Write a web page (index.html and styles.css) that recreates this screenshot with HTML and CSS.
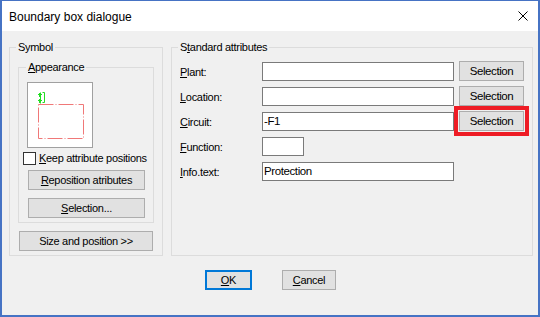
FILE: index.html
```html
<!DOCTYPE html>
<html lang="en">
<head>
    <meta charset="UTF-8">
    <meta name="viewport" content="width=device-width, initial-scale=1.0">
    <title>Boundary box dialogue</title>
    <link rel="stylesheet" href="styles.css">
</head>
<body>
    <div class="window">
        <div class="titlebar">
            <span class="title">Boundary box dialogue</span>
            <svg class="close" width="10" height="10" viewBox="0 0 10 10">
                <path d="M0.5 0.5 L9.5 9.5 M9.5 0.5 L0.5 9.5" stroke="#000" stroke-width="1" fill="none"/>
            </svg>
        </div>

        <div class="client">
            <div class="groups">
                <fieldset class="group symbol">
                    <legend>Symbol</legend>

                    <fieldset class="group appearance">
                        <legend><u>A</u>ppearance</legend>
                        <div class="preview">
                            <svg width="64" height="64" viewBox="0 0 64 64">
                                <!-- attribute marker -->
                                <path d="M10 11.5 h4 M11.5 10 v4 M10 17.5 h4 M11.5 16 v4 M12.5 9.5 v11 M14.5 9.5 h2 v10 h-2" stroke="#22dd22" stroke-width="1" fill="none"/>
                                <!-- boundary box -->
                                <rect x="10.5" y="21.5" width="45" height="34" stroke="#f07878" stroke-width="1" fill="none" stroke-dasharray="15 2 1 2"/>
                            </svg>
                        </div>
                        <label class="check">
                            <span class="box"></span>
                            <span><u>K</u>eep attribute positions</span>
                        </label>
                        <button class="btn side"><u>R</u>eposition atributes</button>
                        <button class="btn side gap"><u>S</u>election...</button>
                    </fieldset>

                    <button class="btn size">Size and position &gt;&gt;</button>
                </fieldset>

                <fieldset class="group standard">
                    <legend>S<u>t</u>andard attributes</legend>

                    <div class="row">
                        <label class="field-label"><u>P</u>lant:</label>
                        <input class="field" type="text" value="">
                        <button class="btn pick">Selection</button>
                    </div>
                    <div class="row">
                        <label class="field-label"><u>L</u>ocation:</label>
                        <input class="field" type="text" value="">
                        <button class="btn pick">Selection</button>
                    </div>
                    <div class="row">
                        <label class="field-label"><u>C</u>ircuit:</label>
                        <input class="field" type="text" value="-F1">
                        <button class="btn pick marked">Selection</button>
                    </div>
                    <div class="row">
                        <label class="field-label"><u>F</u>unction:</label>
                        <input class="field short" type="text" value="">
                    </div>
                    <div class="row">
                        <label class="field-label"><u>I</u>nfo.text:</label>
                        <input class="field" type="text" value="Protection">
                    </div>
                </fieldset>
            </div>

            <div class="actions">
                <button class="btn ok"><u>O</u>K</button>
                <button class="btn cancel"><u>C</u>ancel</button>
            </div>
        </div>
    </div>
</body>
</html>
```

FILE: styles.css
```css
* {
    box-sizing: border-box;
}
body {
    margin: 0;
    font-family: 'Liberation Sans', Arial, sans-serif;
    font-size: 11px;
    letter-spacing: -0.3px; /* narrower, like the dialog font */
    color: #000;
    background-color: #f0f0f0;
}
.window {
    width: 540px;
    height: 317px;
    border: 2px solid #4673c4; /* window accent border */
    border-top-width: 1px;
    background-color: #f0f0f0;
    display: flex;
    flex-direction: column;
}
.titlebar {
    height: 30px;
    background-color: #ffffff;
    display: flex;
    align-items: center;
    justify-content: space-between;
    padding: 0 10px 0 7px;
}
.title {
    font-size: 12px;
    letter-spacing: 0;
    line-height: 16px;
    margin-top: 1px;
}
.close {
    display: block;
}
.client {
    flex: 1;
    padding: 9px 5px 0 7px;
}
.groups {
    display: flex;
    gap: 8px;
}
.group {
    margin: 0;
    padding: 0;
    min-width: 0;
    border: 1px solid #dcdcdc;
}
.group legend {
    padding: 0 2px;
    margin-left: -2px;
    line-height: 14px;
}
.symbol {
    width: 154px;
    height: 216px;
    padding: 6px 8px 0 8px;
}
.appearance {
    width: 136px;
    height: 163px;
    padding: 8px 4px 0 4px;
    display: flex;
    flex-direction: column;
    align-items: flex-start;
}
.appearance legend {
    margin-left: 3px;
}
.preview {
    width: 66px;
    height: 66px;
    margin-left: 4px;
    border: 1px solid #a0a0a0;
    background-color: #ffffff;
}
.preview svg {
    display: block;
}
.check {
    display: flex;
    align-items: center;
    gap: 3px;
    margin-top: 4px;
    height: 13px;
    line-height: 13px;
    white-space: nowrap;
}
.box {
    width: 13px;
    height: 13px;
    border: 1px solid #333333;
    background-color: #ffffff;
}
.btn {
    font-family: inherit;
    font-size: 11px;
    letter-spacing: inherit;
    color: #000;
    height: 20px;
    padding: 0;
    background-color: #e1e1e1;
    border: 1px solid #adadad;
    border-radius: 0;
    line-height: 17px;
    white-space: nowrap;
}
.side {
    width: 117px;
    margin: 5px 0 0 5px;
}
.side.gap {
    margin-top: 8px;
}
.size {
    display: block;
    width: 134px;
    margin: 8px 0 0 1px;
}
.standard {
    width: 362px;
    height: 216px;
    padding: 7px 8px 0 8px;
    display: flex;
    flex-direction: column;
    gap: 5px;
}
.row {
    display: flex;
    align-items: center;
    height: 20px;
}
.field-label {
    width: 82px;
    line-height: 14px;
    padding-top: 2px;
}
.field {
    width: 192px;
    height: 19px;
    margin: 0 5px 0 0;
    padding: 0 1px 1px 1px;
    font-family: inherit;
    font-size: 11.5px;
    letter-spacing: -0.4px;
    color: #000;
    border: 1px solid #7a7a7a;
    border-radius: 0;
    background-color: #ffffff;
    outline: none;
}
.field.short {
    width: 42px;
}
.pick {
    width: 65px;
    font-size: 11.5px;
    letter-spacing: -0.4px;
}
.marked {
    outline: 4px solid #ee1c25; /* highlighted in the screenshot */
    outline-offset: 1px;
}
.actions {
    display: flex;
    justify-content: center;
    gap: 30px;
    margin-top: 14px;
    padding-right: 1px;
}
.ok {
    width: 47px;
    border: 2px solid #0078d7;
}
.cancel {
    width: 54px;
}
```
